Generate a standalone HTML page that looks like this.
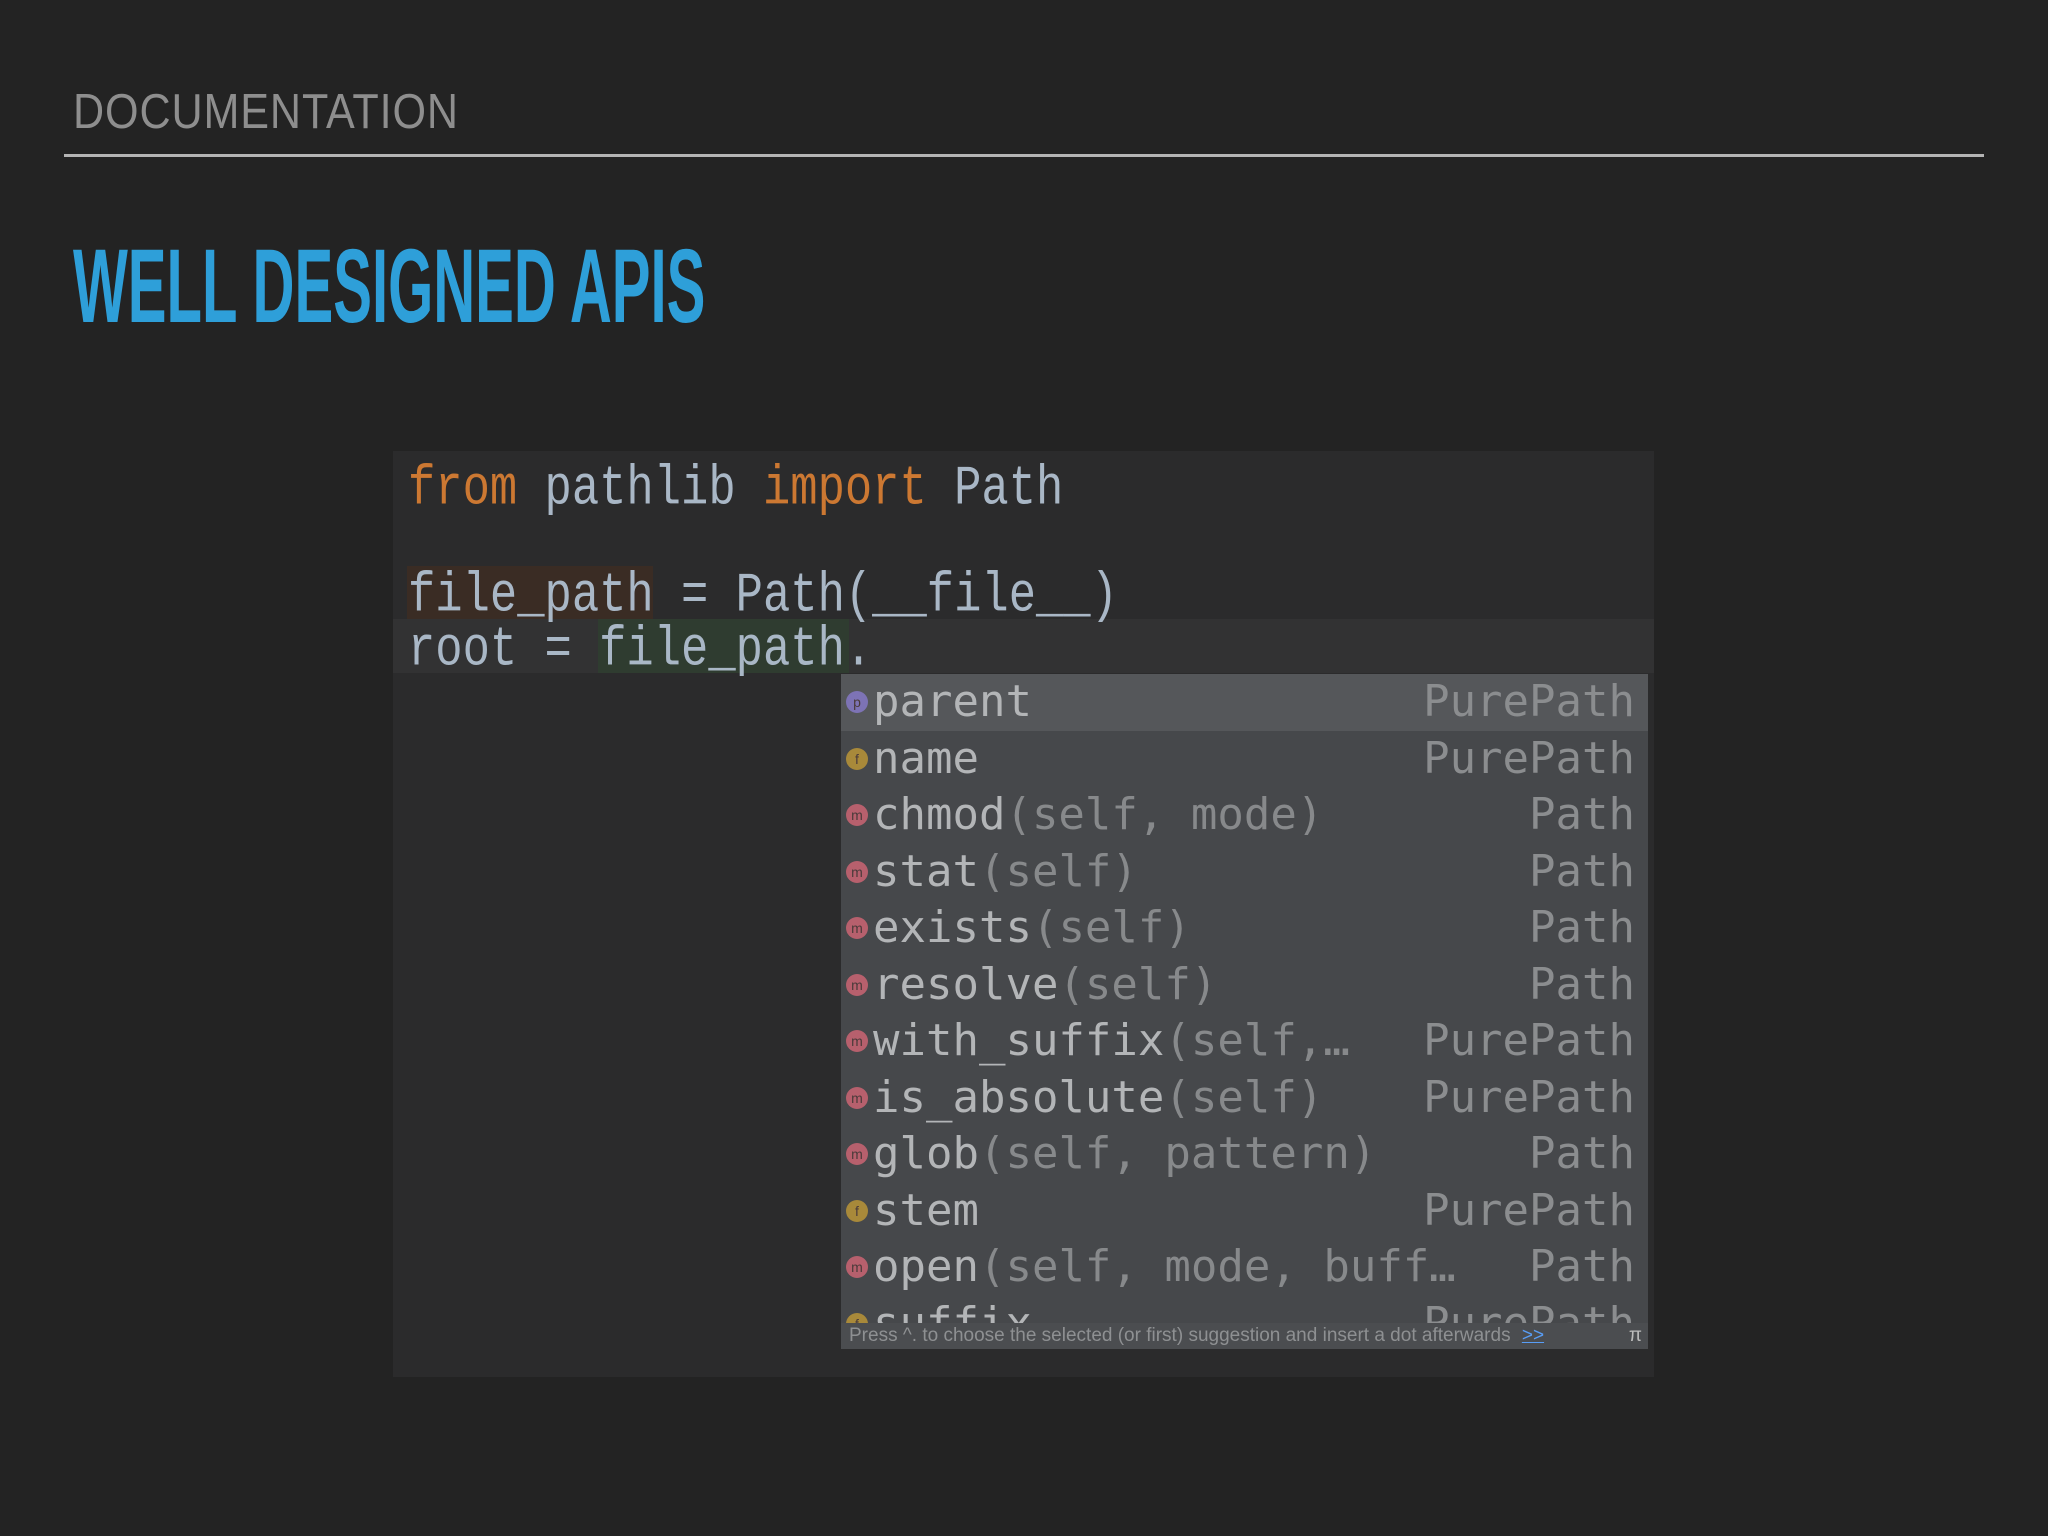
<!DOCTYPE html>
<html><head><meta charset="utf-8"><style>
body{margin:0;width:2048px;height:1536px;background:#232323;position:relative;overflow:hidden;font-family:"Liberation Sans",sans-serif}
.a{position:absolute}
.h1{left:73px;top:84px;font-size:49px;color:#8e8e8e;transform:scaleX(.88);transform-origin:0 0;white-space:nowrap;letter-spacing:1px}
.rule{left:64px;top:154px;width:1920px;height:3px;background:#b4b4b4}
.title{left:73px;top:232px;font-size:105px;font-weight:bold;color:#2e9fd9;transform:scaleX(.553);transform-origin:0 0;white-space:nowrap;line-height:110px}
.panel{left:393px;top:451px;width:1261px;height:926px;background:#2b2b2c}
.code{font-family:"Liberation Mono",monospace;font-size:45.5px;color:#a9b7c6;white-space:pre;line-height:54px}
.code span.l{display:inline-block;transform:scaleY(1.22);transform-origin:0 60%}
.k{color:#cc7832}
.pop{left:841px;top:674px;width:807px;height:675px;background:#46484b;overflow:hidden}
.row{position:absolute;left:0;width:807px;height:56.5px;font-family:"DejaVu Sans Mono",monospace;font-size:44px;color:#b3b5b7;line-height:56px;white-space:pre}
.row .n{position:absolute;left:32px;top:0}
.row .t{position:absolute;right:13px;top:0;color:#8b8d8f}
.p{color:#87898b}
.ic{position:absolute;left:5px;top:17px;width:22px;height:22px;border-radius:50%;font-size:14px;line-height:22px;text-align:center;color:#4a3a3a;font-family:"Liberation Sans",sans-serif}
.m{background:#b7606d}.f{background:#a8893a}.pp{background:#7d73b5}
.foot{left:841px;top:1323px;width:807px;height:26px;background:#4b4d50;font-size:19px;color:#8e9092;line-height:26px}
</style></head><body>
<div class="a h1">DOCUMENTATION</div>
<div class="a rule"></div>
<div class="a title">WELL DESIGNED APIS</div>
<div class="a panel"></div>
<div class="a" style="left:393px;top:619px;width:1261px;height:54px;background:#323233"></div>
<div class="a" style="left:407px;top:566px;width:246px;height:53px;background:#3a2c24"></div>
<div class="a" style="left:598px;top:619px;width:251px;height:54px;background:#2f3c30"></div>
<div class="a code" style="left:408px;top:463px"><span class="l"><span class="k">from</span> pathlib <span class="k">import</span> Path</span></div>
<div class="a code" style="left:408px;top:570px"><span class="l">file_path = Path(__file__)</span></div>
<div class="a code" style="left:408px;top:624px"><span class="l">root = file_path.</span></div>
<div class="a pop">
<div class="row" style="top:0;background:#55575a"><div class="ic pp">p</div><span class="n">parent</span><span class="t">PurePath</span></div>
<div class="row" style="top:56.5px"><div class="ic f">f</div><span class="n">name</span><span class="t">PurePath</span></div>
<div class="row" style="top:113px"><div class="ic m">m</div><span class="n">chmod<span class="p">(self, mode)</span></span><span class="t">Path</span></div>
<div class="row" style="top:169.5px"><div class="ic m">m</div><span class="n">stat<span class="p">(self)</span></span><span class="t">Path</span></div>
<div class="row" style="top:226px"><div class="ic m">m</div><span class="n">exists<span class="p">(self)</span></span><span class="t">Path</span></div>
<div class="row" style="top:282.5px"><div class="ic m">m</div><span class="n">resolve<span class="p">(self)</span></span><span class="t">Path</span></div>
<div class="row" style="top:339px"><div class="ic m">m</div><span class="n">with_suffix<span class="p">(self,…</span></span><span class="t">PurePath</span></div>
<div class="row" style="top:395.5px"><div class="ic m">m</div><span class="n">is_absolute<span class="p">(self)</span></span><span class="t">PurePath</span></div>
<div class="row" style="top:452px"><div class="ic m">m</div><span class="n">glob<span class="p">(self, pattern)</span></span><span class="t">Path</span></div>
<div class="row" style="top:508.5px"><div class="ic f">f</div><span class="n">stem</span><span class="t">PurePath</span></div>
<div class="row" style="top:565px"><div class="ic m">m</div><span class="n">open<span class="p">(self, mode, buff…</span></span><span class="t">Path</span></div>
<div class="row" style="top:621.5px"><div class="ic f">f</div><span class="n">suffix</span><span class="t">PurePath</span></div>
</div>
<div class="a foot"><span style="margin-left:8px">Press ^. to choose the selected (or first) suggestion and insert a dot afterwards</span> <span style="color:#589df6;text-decoration:underline;margin-left:6px">&gt;&gt;</span><span style="position:absolute;right:6px;color:#bbb">π</span></div>
</body></html>
